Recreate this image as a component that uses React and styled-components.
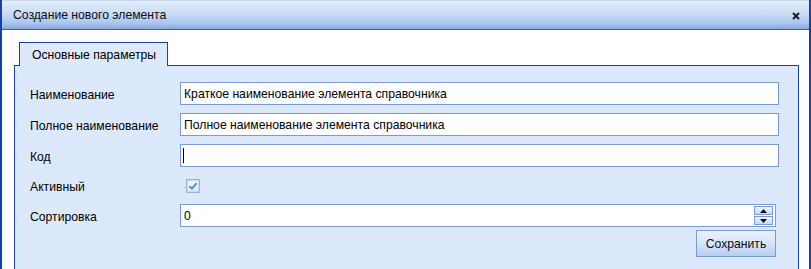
import React from 'react';
import styled, { createGlobalStyle } from 'styled-components';

const GlobalStyle = createGlobalStyle`
  html, body {
    margin: 0;
    padding: 0;
    background: #ffffff;
  }
  body {
    font-family: 'Liberation Sans', Arial, sans-serif;
    font-size: 12px;
    color: #000;
  }
`

const fields = [
  { label: 'Наименование', value: 'Краткое наименование элемента справочника' },
  { label: 'Полное наименование', value: 'Полное наименование элемента справочника' },
  { label: 'Код', value: '', caret: true },
]

class App extends React.Component {
  render() {
    return (
      <Window>
        <GlobalStyle />
        <TitleBar>
          <Title>Создание нового элемента</Title>
          <CloseIcon viewBox="0 0 8 8">
            <path d="M1 1 L7 7 M7 1 L1 7" stroke="#1d1d1d" strokeWidth="2" />
          </CloseIcon>
        </TitleBar>
        <Body>
          <TabStrip>
            <Tab>Основные параметры</Tab>
          </TabStrip>
          <Panel>
            <Form>
              {fields.map((f) => (
                <React.Fragment key={f.label}>
                  <Label>{f.label}</Label>
                  <Field>
                    {f.value}
                    {f.caret && <Caret />}
                  </Field>
                </React.Fragment>
              ))}
              <Label>Активный</Label>
              <CheckCell>
                <Dot />
                <CheckBox viewBox="0 0 14 14">
                  <defs>
                    <linearGradient id="cbg" x1="0" y1="0" x2="0" y2="1">
                      <stop offset="0" stopColor="#f4f8fe" />
                      <stop offset="1" stopColor="#dbe7f8" />
                    </linearGradient>
                  </defs>
                  <rect x="0.5" y="0.5" width="13" height="13" fill="url(#cbg)" stroke="#9ab4e0" />
                  <rect x="1.5" y="1.5" width="11" height="11" fill="none" stroke="#c9d9f2" />
                  <path d="M3.5 7.2 L6 9.6 L10.6 4.2" fill="none" stroke="#4b8fe6" strokeWidth="2" />
                </CheckBox>
              </CheckCell>
              <Label>Сортировка</Label>
              <Field narrow>
                0
                <Spinner>
                  <SpinButton>
                    <svg width="7" height="4" viewBox="0 0 7 4"><path d="M0 4 L3.5 0 L7 4 Z" fill="#111" /></svg>
                  </SpinButton>
                  <SpinButton>
                    <svg width="7" height="4" viewBox="0 0 7 4"><path d="M0 0 L3.5 4 L7 0 Z" fill="#111" /></svg>
                  </SpinButton>
                </Spinner>
              </Field>
              <Actions>
                <SaveButton>Сохранить</SaveButton>
              </Actions>
            </Form>
          </Panel>
        </Body>
      </Window>
    );
  }
}

const Window = styled.div`
  width: 811px;
  height: 269px;
  box-sizing: border-box;
  border-left: 2px solid #1a3f9e;
  border-right: 2px solid #1a3f9e;
  display: flex;
  flex-direction: column;
  overflow: hidden;
  background: #fff;
`

const TitleBar = styled.div`
  height: 30px;
  flex: none;
  box-sizing: border-box;
  display: flex;
  align-items: center;
  justify-content: space-between;
  padding: 0 9px 0 11px;
  background: linear-gradient(#e2edfb 0%, #c9dcf6 45%, #a9c4ef 80%, #86a8e2 100%);
  border-top: 1px solid #c8d6ec;
  border-bottom: 1px solid #3b62b8;
`

const Title = styled.span`
  font-size: 12.2px;
  color: #0d0d0d;
`

const CloseIcon = styled.svg`
  width: 8px;
  height: 8px;
  margin-top: 1px;
`

const Body = styled.div`
  flex: 1;
  display: flex;
  flex-direction: column;
  padding: 12px 10px 0 12px;
`

const TabStrip = styled.div`
  display: flex;
  padding-left: 5px;
  margin-bottom: -1px;
  position: relative;
  z-index: 1;
`

const Tab = styled.div`
  width: 149px;
  height: 24px;
  box-sizing: border-box;
  border: 1px solid #1a3f9e;
  border-bottom: none;
  background: #dce9fc;
  display: flex;
  align-items: center;
  padding-left: 12px;
  font-size: 12.2px;
`

const Panel = styled.div`
  flex: 1;
  box-sizing: border-box;
  border: 1px solid #1a3f9e;
  border-bottom: none;
  background: #dce9fc;
  padding: 16px 19px 0 15px;
`

const Form = styled.div`
  display: grid;
  grid-template-columns: 150px 1fr;
  grid-template-rows: 23px 23px 23px 21px 23px auto;
  row-gap: 8px;
  align-items: center;
`

const Label = styled.div`
  font-size: 12.2px;
  padding-top: 2px;
`

const Field = styled.div`
  height: 23px;
  box-sizing: border-box;
  border: 1px solid #7b9bd8;
  background: #fff;
  display: flex;
  align-items: center;
  padding: 0 3px;
  margin-right: ${(p) => (p.narrow ? '3px' : '0')};
  font-size: 12.2px;
  position: relative;
`

const Caret = styled.span`
  width: 1px;
  height: 15px;
  background: #000;
  margin-left: -1px;
`

const CheckCell = styled.div`
  display: flex;
  align-items: center;
  padding-left: 4px;
`

const Dot = styled.span`
  width: 1px;
  height: 1px;
  background: #8aa0c8;
  margin-top: 4px;
  margin-right: 1px;
`

const CheckBox = styled.svg`
  width: 14px;
  height: 14px;
`

const Spinner = styled.div`
  position: absolute;
  right: 2px;
  top: 1px;
  display: flex;
  flex-direction: column;
  gap: 1px;
`

const SpinButton = styled.div`
  width: 19px;
  height: 9px;
  box-sizing: border-box;
  border: 1px solid #7b9bd8;
  background: linear-gradient(#eef4fd, #c7daf5);
  display: flex;
  align-items: center;
  justify-content: center;
`

const Actions = styled.div`
  grid-column: 1 / -1;
  display: flex;
  justify-content: flex-end;
  margin-top: -5px;
  padding-right: 3px;
`

const SaveButton = styled.button`
  width: 80px;
  height: 27px;
  box-sizing: border-box;
  border: 1px solid #7b9bd8;
  background: linear-gradient(#e9f1fc 0%, #d6e4f9 50%, #b6cef2 100%);
  font-family: 'Liberation Sans', Arial, sans-serif;
  font-size: 12.2px;
  color: #0d0d0d;
  padding: 0;
`

export default App;
